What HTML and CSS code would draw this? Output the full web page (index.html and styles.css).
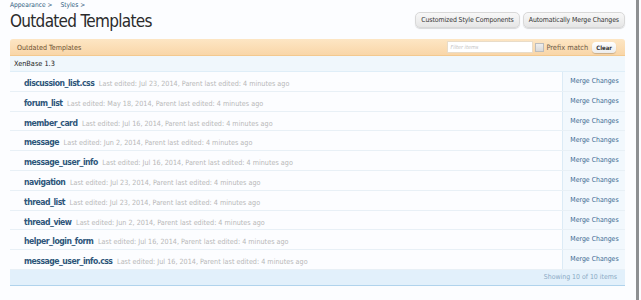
FILE: index.html
```html
<!DOCTYPE html>
<html>
<head>
<meta charset="utf-8">
<link rel="stylesheet" href="styles.css">
</head>
<body>
<div class="page">
  <div class="main">
    <div class="crumbs"><span class="crumb">Appearance</span> &gt; <span class="crumb c2">Styles</span> &gt;</div>
    <div class="titlebar">
      <h1>Outdated Templates</h1>
      <div class="actions">
        <span class="btn">Customized Style Components</span>
        <span class="btn">Automatically Merge Changes</span>
      </div>
    </div>
    <div class="list">
      <div class="head">
        <span class="htitle">Outdated Templates</span>
        <div class="filter">
          <span class="finput">Filter items</span>
          <span class="chk"></span>
          <span class="plabel">Prefix match</span>
          <span class="clear">Clear</span>
        </div>
      </div>
      <div class="group">XenBase 1.3</div>
      <div class="row"><div class="cell"><span class="name">discussion_list.css</span> <span class="meta">Last edited: Jul 23, 2014, Parent last edited: 4 minutes ago</span></div><span class="merge">Merge Changes</span></div>
      <div class="row"><div class="cell"><span class="name">forum_list</span> <span class="meta">Last edited: May 18, 2014, Parent last edited: 4 minutes ago</span></div><span class="merge">Merge Changes</span></div>
      <div class="row"><div class="cell"><span class="name">member_card</span> <span class="meta">Last edited: Jul 16, 2014, Parent last edited: 4 minutes ago</span></div><span class="merge">Merge Changes</span></div>
      <div class="row"><div class="cell"><span class="name">message</span> <span class="meta">Last edited: Jun 2, 2014, Parent last edited: 4 minutes ago</span></div><span class="merge">Merge Changes</span></div>
      <div class="row"><div class="cell"><span class="name">message_user_info</span> <span class="meta">Last edited: Jul 16, 2014, Parent last edited: 4 minutes ago</span></div><span class="merge">Merge Changes</span></div>
      <div class="row"><div class="cell"><span class="name">navigation</span> <span class="meta">Last edited: Jul 23, 2014, Parent last edited: 4 minutes ago</span></div><span class="merge">Merge Changes</span></div>
      <div class="row"><div class="cell"><span class="name">thread_list</span> <span class="meta">Last edited: Jul 23, 2014, Parent last edited: 4 minutes ago</span></div><span class="merge">Merge Changes</span></div>
      <div class="row"><div class="cell"><span class="name">thread_view</span> <span class="meta">Last edited: Jun 2, 2014, Parent last edited: 4 minutes ago</span></div><span class="merge">Merge Changes</span></div>
      <div class="row"><div class="cell"><span class="name">helper_login_form</span> <span class="meta">Last edited: Jul 16, 2014, Parent last edited: 4 minutes ago</span></div><span class="merge">Merge Changes</span></div>
      <div class="row"><div class="cell"><span class="name">message_user_info.css</span> <span class="meta">Last edited: Jul 16, 2014, Parent last edited: 4 minutes ago</span></div><span class="merge">Merge Changes</span></div>
      <div class="foot">Showing 10 of 10 items</div>
    </div>
  </div>
  <div class="edge"></div>
</div>
</body>
</html>
```

FILE: styles.css
```css
html, body { margin: 0; padding: 0; background: #fcfdff; }
body { font-family: "DejaVu Sans Condensed", "DejaVu Sans", sans-serif; font-stretch: condensed; color: #333; width: 641px; height: 300px; overflow: hidden; }
.page { display: flex; height: 300px; }
.main { width: 615px; padding: 0 0 0 10px; }
.edge { width: 3px; margin-left: 11px; background: #8d8f92; }
.crumbs { font-size: 6.6px; color: #2f5b80; height: 8px; line-height: 8px; padding-top: 1px; }
.crumb { color: #2f5b80; }
.crumbs .c2 { margin-left: 6px; }
.titlebar { display: flex; justify-content: space-between; align-items: flex-start; height: 30px; }
h1 { margin: 0; font-weight: normal; font-size: 17px; line-height: 22px; padding-top: 1px; color: #2b2b2b; letter-spacing: -0.7px; }
.actions { display: flex; gap: 3px; padding-top: 3px; }
.btn { font-size: 6.9px; color: #333; background: linear-gradient(#f8f8f8, #e6e6e6); border: 1px solid #d8d8d8; border-radius: 5px; padding: 0 5px; height: 14px; line-height: 14px; box-shadow: 0 1px 1px rgba(0,0,0,0.15); letter-spacing: -0.1px; }
.head { display: flex; justify-content: space-between; align-items: center; height: 16px; background: linear-gradient(#fde6c4, #f9d6a8); border-bottom: 1px solid #f3c98f; border-radius: 3px 3px 0 0; padding: 0 9px 0 7px; }
.htitle { font-size: 7.1px; color: #6b5030; }
.filter { display: flex; align-items: center; }
.finput { width: 82px; height: 10px; line-height: 10px; background: #fff; border: 1px solid #e9dcc8; font-size: 5.5px; font-style: italic; color: #c4c4c4; padding-left: 2px; }
.chk { width: 7px; height: 7px; border: 1px solid #bdbdbd; background: linear-gradient(#eee,#d9d9d9); margin-left: 2px; }
.plabel { font-size: 7.4px; color: #6b5a48; margin-left: 2px; }
.clear { font-size: 6px; font-weight: bold; color: #333; background: linear-gradient(#fff, #ececec); border-radius: 4px; padding: 0 4px; height: 11px; line-height: 11px; margin-left: 4px; box-shadow: 0 1px 1px rgba(0,0,0,0.2); }
.group { font-size: 7.3px; color: #222; height: 15px; line-height: 15px; padding-left: 4px; background: #f0f7fc; border-bottom: 1px solid #dfeef8; }
.row { display: flex; height: 18.8px; border-bottom: 1px solid #e8f0f6; }
.cell { flex: 1; padding-left: 14px; line-height: 18.8px; white-space: nowrap; }
.name { font-size: 8.6px; font-weight: bold; color: #2e567a; letter-spacing: -0.5px; }
.meta { font-size: 7.2px; color: #b8b8b8; }
.merge { width: 61px; padding-left: 1px; border-left: 1px solid #dcebf6; background: #f2f8fd; font-size: 6.9px; color: #3b6a92; line-height: 18.8px; text-align: center; }
.foot { height: 15px; line-height: 15px; background: #e2f0fb; border-bottom: 1px solid #b0d3ec; text-align: right; font-size: 6.9px; color: #8aaac4; padding-right: 8px; }
```
